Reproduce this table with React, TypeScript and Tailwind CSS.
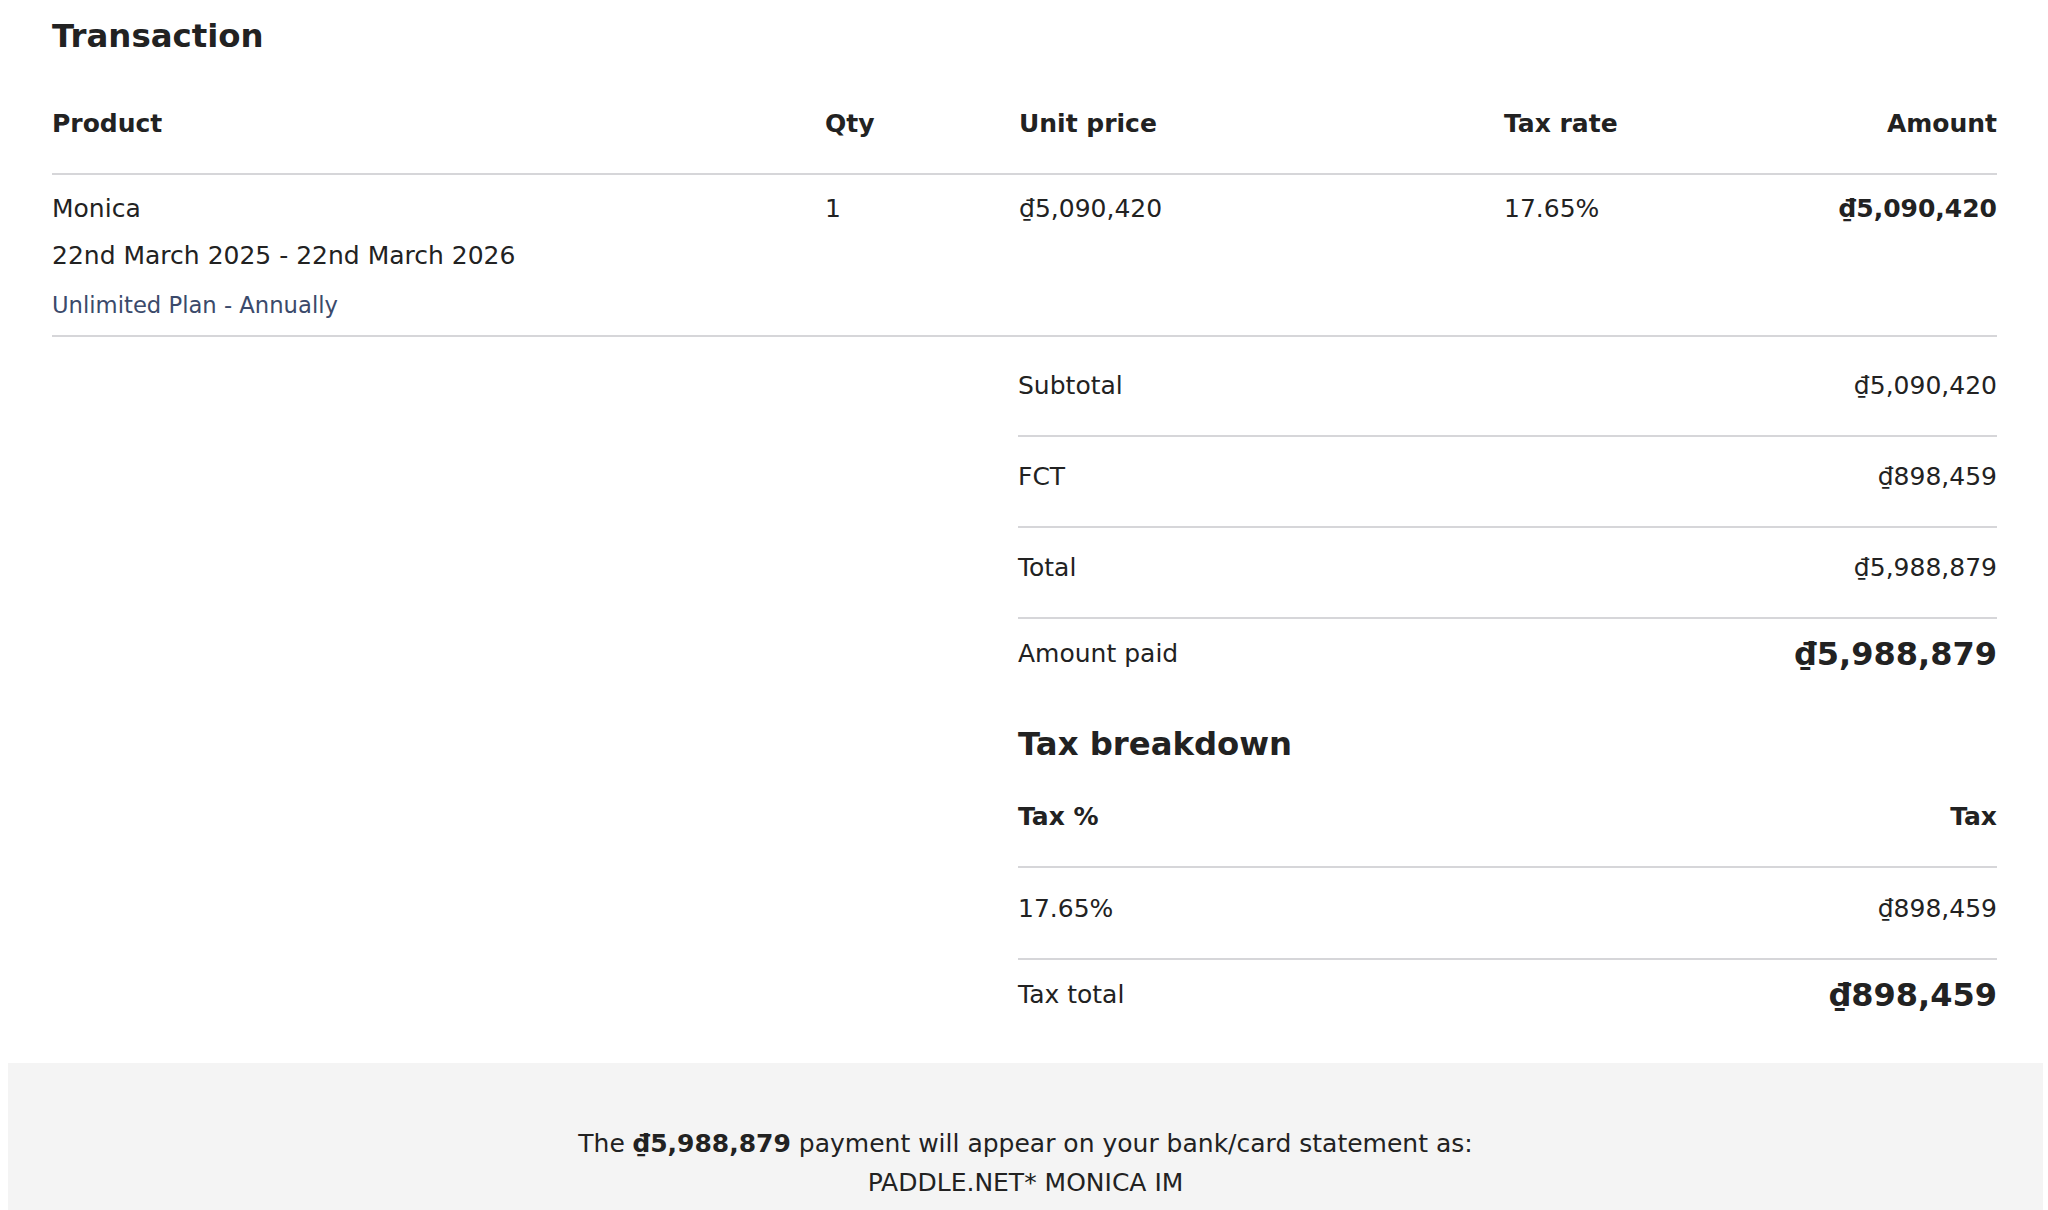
import React from "react";

const font = { fontFamily: '"DejaVu Sans", "Liberation Sans", sans-serif' };

function SummaryRow({ label, value, first }: { label: string; value: string; first?: boolean }) {
  return (
    <div
      className={`flex justify-between border-b-2 border-[#d6d6d9] pb-[35px] text-[25px] leading-[28px] ${first ? "pt-[35px]" : "pt-[26px]"}`}
    >
      <span>{label}</span>
      <span>{value}</span>
    </div>
  );
}

function BigRow({ label, value }: { label: string; value: string }) {
  return (
    <div className="flex items-center justify-between pt-[16px]">
      <span className="text-[25px] leading-[28px]">{label}</span>
      <span className="text-[32px] font-bold leading-[38px]">{value}</span>
    </div>
  );
}

export default function App() {
  return (
    <div className="min-h-[1210px] w-full bg-white text-[#222222]" style={font}>
      <div className="pl-[52px] pr-[51px]">
        <h1 className="pt-[17px] text-[32.4px] font-bold leading-[38px]">Transaction</h1>

        <div className="mt-[55px] grid grid-cols-[773px_194px_485px_1fr_auto] border-b-2 border-[#d6d6d9] pb-[35px] text-[25px] font-bold leading-[28px]">
          <div>Product</div>
          <div>Qty</div>
          <div>Unit price</div>
          <div>Tax rate</div>
          <div className="text-right">Amount</div>
        </div>

        <div className="grid grid-cols-[773px_194px_485px_1fr_auto] border-b-2 border-[#d6d6d9] pb-[16px] pt-[20px] text-[25px] leading-[28px]">
          <div>
            <div>Monica</div>
            <div className="mt-[19px]">22nd March 2025 - 22nd March 2026</div>
            <div className="mt-[21px] text-[22.7px] text-[#3b4a6b]">Unlimited Plan - Annually</div>
          </div>
          <div>1</div>
          <div>₫5,090,420</div>
          <div>17.65%</div>
          <div className="text-right font-bold">₫5,090,420</div>
        </div>

        <div className="flex justify-end">
          <div className="w-[979px]">
            <SummaryRow label="Subtotal" value="₫5,090,420" first />
            <SummaryRow label="FCT" value="₫898,459" />
            <SummaryRow label="Total" value="₫5,988,879" />
            <BigRow label="Amount paid" value="₫5,988,879" />

            <h2 className="mt-[52px] text-[32.3px] font-bold leading-[38px]">Tax breakdown</h2>

            <div className="mt-[40px] flex justify-between border-b-2 border-[#d6d6d9] pb-[35px] text-[25px] font-bold leading-[28px]">
              <span>Tax %</span>
              <span>Tax</span>
            </div>
            <div className="flex justify-between border-b-2 border-[#d6d6d9] pb-[35px] pt-[27px] text-[25px] leading-[28px]">
              <span>17.65%</span>
              <span>₫898,459</span>
            </div>
            <BigRow label="Tax total" value="₫898,459" />
          </div>
        </div>
      </div>

      <div className="ml-[8px] mr-[5px] mt-[49px] bg-[#f4f4f4] pb-[40px] pt-[61px] text-center text-[25px] leading-[39px]">
        <p>
          The <span className="font-bold">₫5,988,879</span> payment will appear on your bank/card statement as:
        </p>
        <p>PADDLE.NET* MONICA IM</p>
      </div>
    </div>
  );
}
